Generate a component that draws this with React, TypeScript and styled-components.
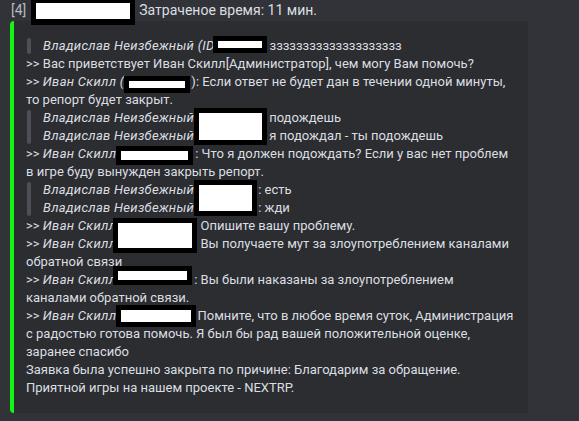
import React from 'react';
import styled, { createGlobalStyle } from 'styled-components';

const GlobalStyle = createGlobalStyle`
  html, body {
    margin: 0;
    padding: 0;
    background: #313338;
  }
  body {
    font-family: Roboto, "Noto Sans", sans-serif;
    color: #dbdee1;
  }
`;

const Page = styled.div`
  width: 579px;
  height: 421px;
  padding-left: 10px;
  box-sizing: border-box;
  overflow: hidden;
`;

const Header = styled.div`
  display: flex;
  align-items: center;
  height: 21px;
  font-size: 14px;
  line-height: 21px;
  padding-left: 1px;
  white-space: nowrap;
`;

const Index = styled.span`
  color: #b5bac1;
`;

const Embed = styled.div`
  width: 518px;
  box-sizing: border-box;
  background: #2b2d31;
  border-left: 4px solid #14f514;
  border-radius: 4px;
  padding: 16px 12px 16px 12px;
  font-size: 13px;
  line-height: 18px;
`;

const Line = styled.div`
  height: 18px;
  white-space: nowrap;
`;

const Quote = styled.div`
  display: flex;
  gap: 12px;
  padding-left: 1px;
`;

const QuoteBar = styled.div`
  width: 4px;
  border-radius: 4px;
  background: #4e5058;
  margin: 1px 0;
`;

const QuoteBody = styled.div`
  display: flex;
  flex-direction: column;
`;

const Name = styled.em`
  font-style: italic;
  letter-spacing: 0.3px;
`;

// keeps the gap in the text where a censored part was
const Redact = styled.span<{ $w: number }>`
  display: inline-block;
  position: relative;
  width: ${p => p.$w}px;
  height: 0;
`;

// black-framed white box painted over the text
const Censor = styled.span<{ $left?: number; $top: number; $w: number; $h: number }>`
  position: absolute;
  left: ${p => p.$left ?? 0}px;
  top: ${p => p.$top}px;
  width: ${p => p.$w}px;
  height: ${p => p.$h}px;
  box-sizing: border-box;
  background: #fff;
  border: 5px solid #000;
`;

const HeaderRedact = styled.span`
  display: inline-block;
  width: 104px;
  height: 25px;
  margin: 0 4px 0 5px;
  align-self: flex-start;
  box-sizing: border-box;
  background: #fff;
  border: 5px solid #000;
  border-top-width: 3px;
  border-bottom-width: 6px;
`;

export default function App() {
  return (
    <>
      <GlobalStyle />
      <Page>
        <Header>
          <Index>[4]</Index>
          <HeaderRedact />
          <span>Затраченое время: 11 мин.</span>
        </Header>
        <Embed>
          <Quote>
            <QuoteBar />
            <QuoteBody>
              <Line>
                <Name>Владислав Неизбежный (ID</Name>
                <Redact $w={55}><Censor $left={-2} $top={-14.5} $w={54} $h={17} /></Redact>
                зззззззззззззззззззз
              </Line>
            </QuoteBody>
          </Quote>
          <Line>&gt;&gt; Вас приветствует Иван Скилл[Администратор], чем могу Вам помочь?</Line>
          <Line>
            &gt;&gt; <Name>Иван Скилл (</Name>
            <Redact $w={67}><Censor $top={-10.5} $w={66} $h={17} /></Redact>
            ): Если ответ не будет дан в течении одной минуты,
          </Line>
          <Line>то репорт будет закрыт.</Line>
          <Quote>
            <QuoteBar />
            <QuoteBody>
              <Line>
                <Name>Владислав Неизбежный</Name>
                <Redact $w={75}><Censor $top={-14.5} $w={73} $h={37} /></Redact>
                подождешь
              </Line>
              <Line>
                <Name>Владислав Неизбежный</Name>
                <Redact $w={75} />
                я подождал - ты подождешь
              </Line>
            </QuoteBody>
          </Quote>
          <Line>
            &gt;&gt; <Name>Иван Скилл</Name>
            <Redact $w={79}><Censor $top={-12.5} $w={77} $h={19} /></Redact>
            : Что я должен подождать? Если у вас нет проблем
          </Line>
          <Line>в игре буду вынужден закрыть репорт.</Line>
          <Quote>
            <QuoteBar />
            <QuoteBody>
              <Line>
                <Name>Владислав Неизбежный</Name>
                <Redact $w={64}><Censor $top={-14.5} $w={63} $h={36} /></Redact>
                : есть
              </Line>
              <Line>
                <Name>Владислав Неизбежный</Name>
                <Redact $w={64} />
                : жди
              </Line>
            </QuoteBody>
          </Quote>
          <Line>
            &gt;&gt; <Name>Иван Скилл</Name>
            <Redact $w={81}><Censor $left={-3} $top={-12.5} $w={84} $h={35} /></Redact>
            {' '}Опишите вашу проблему.
          </Line>
          <Line>
            &gt;&gt; <Name>Иван Скилл</Name>
            <Redact $w={81} />
            {' '}Вы получаете мут за злоупотреблением каналами
          </Line>
          <Line>обратной связи</Line>
          <Line>
            &gt;&gt; <Name>Иван Скилл</Name>
            <Redact $w={78}><Censor $left={-3} $top={-18.5} $w={79} $h={19} /></Redact>
            : Вы были наказаны за злоупотреблением
          </Line>
          <Line>каналами обратной связи.</Line>
          <Line>
            &gt;&gt; <Name>Иван Скилл</Name>
            <Redact $w={78}><Censor $top={-15.5} $w={80} $h={22} /></Redact>
            {' '}Помните, что в любое время суток, Администрация
          </Line>
          <Line>с радостью готова помочь. Я был бы рад вашей положительной оценке,</Line>
          <Line>заранее спасибо</Line>
          <Line>Заявка была успешно закрыта по причине: Благодарим за обращение.</Line>
          <Line>Приятной игры на нашем проекте - NEXTRP.</Line>
        </Embed>
      </Page>
    </>
  );
}
